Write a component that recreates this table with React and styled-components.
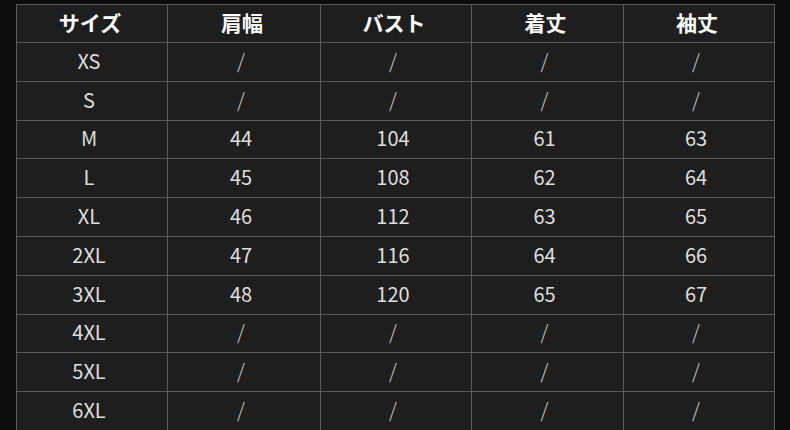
import React from 'react';
import styled, { createGlobalStyle } from 'styled-components';

const GlobalStyle = createGlobalStyle`
  html, body {
    margin: 0;
    padding: 0;
    background: #0b0b0b;
  }
  body {
    font-family: "Noto Sans CJK JP", "Noto Sans", sans-serif;
    -webkit-font-smoothing: antialiased;
  }
`;

const Page = styled.div`
  width: 790px;
  height: 430px;
  overflow: hidden;
  padding: 4px 16px 0 16px;
  box-sizing: border-box;
  background: #0b0b0b;
`;

const Table = styled.table`
  width: 758px;
  border-collapse: collapse;
  table-layout: fixed;
  background: #1e1e1e;
`;

const HeadCell = styled.th`
  height: 35px;
  padding: 0 4px 2px 0;
  border: 1px solid #5a5a5a;
  color: #ffffff;
  font-size: 21px;
  font-weight: 700;
  text-align: center;
  vertical-align: middle;
  line-height: 1;
`;

const Cell = styled.td`
  height: 35.8px;
  padding: 0 6px 2px 0;
  border: 1px solid #5a5a5a;
  color: #dedede;
  font-size: 20px;
  font-weight: 400;
  text-align: center;
  vertical-align: middle;
  line-height: 1;
`;

const Slash = styled.span`
  color: #cfcfcf;
  font-size: 20px;
  font-weight: 300;
`;

const columns = ['サイズ', '肩幅', 'バスト', '着丈', '袖丈'];
const widths = [151, 153, 151, 152, 151];

const rows = [
  ['XS', null, null, null, null],
  ['S', null, null, null, null],
  ['M', '44', '104', '61', '63'],
  ['L', '45', '108', '62', '64'],
  ['XL', '46', '112', '63', '65'],
  ['2XL', '47', '116', '64', '66'],
  ['3XL', '48', '120', '65', '67'],
  ['4XL', null, null, null, null],
  ['5XL', null, null, null, null],
  ['6XL', null, null, null, null],
];

export default function App() {
  return (
    <>
      <GlobalStyle />
      <Page>
        <Table>
          <colgroup>
            {widths.map((w, i) => (
              <col key={i} style={{ width: w }} />
            ))}
          </colgroup>
          <thead>
            <tr>
              {columns.map((c) => (
                <HeadCell key={c}>{c}</HeadCell>
              ))}
            </tr>
          </thead>
          <tbody>
            {rows.map((r) => (
              <tr key={r[0]}>
                {r.map((v, i) => (
                  <Cell key={i}>{v === null ? <Slash>/</Slash> : v}</Cell>
                ))}
              </tr>
            ))}
          </tbody>
        </Table>
      </Page>
    </>
  );
}
